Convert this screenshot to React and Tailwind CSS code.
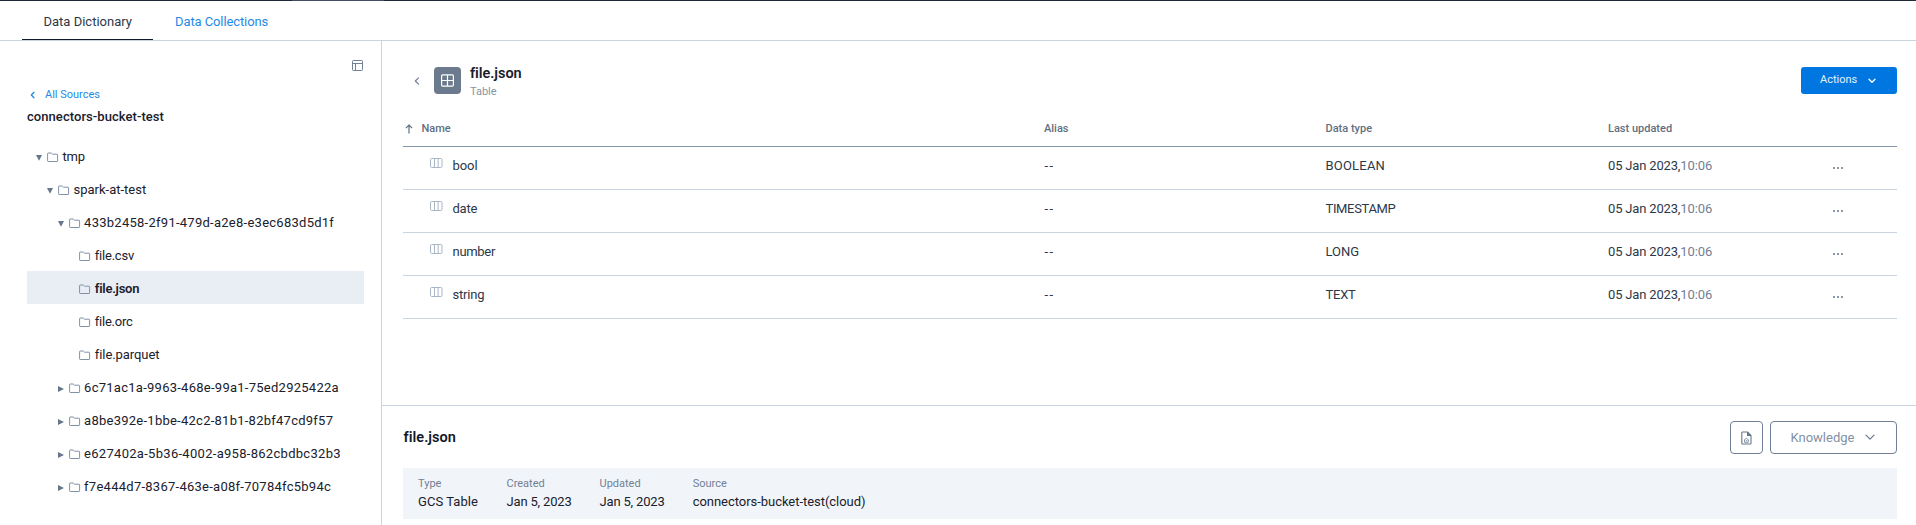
import React from 'react';

const Folder = () => (
  <svg width="12" height="11" viewBox="0 0 12 11" fill="none" stroke="#8091a5" className="shrink-0">
    <path d="M1 1h3.200l1.200 1.200H10a.6.6 0 0 1 .6.6v6.100a.6.6 0 0 1-.6.6H1.200a.6.6 0 0 1-.6-.6V1.500a.5.5 0 0 1 .4-.5z" />
  </svg>
);

const Caret = ({ state }) => (
  <svg width="6" height="6" viewBox="0 0 6 6" fill="#66778b" className="mt-[2px] shrink-0">
    {state === 'open' && <path d="M0 0h6L3 5.700z" />}
    {state === 'closed' && <path d="M0 0v6L6 3z" />}
  </svg>
);

const ColumnIcon = () => (
  <svg width="13" height="11" viewBox="0 0 13 11" fill="none" stroke="#a9b6c5" className="shrink-0">
    <rect x=".5" y=".5" width="11.5" height="9" rx="1.2" />
    <path d="M4.500 .5v9M8.100 .5v9" />
  </svg>
);

const Chevron = ({ d, w, h, color, sw = 1.2 }) => (
  <svg width={w} height={h} viewBox={`0 0 ${w} ${h}`} fill="none" stroke={color} strokeWidth={sw} strokeLinecap="round" strokeLinejoin="round" className="shrink-0">
    <path d={d} />
  </svg>
);

const tree = [
  { name: 'tmp', pad: 'pl-[9px]', state: 'open', tr: 'tracking-[-0.15px]' },
  { name: 'spark-at-test', pad: 'pl-[20px]', state: 'open', tr: 'tracking-[0px]' },
  { name: '433b2458-2f91-479d-a2e8-e3ec683d5d1f', pad: 'pl-[30.6px]', state: 'open', tr: 'tracking-[0.26px]' },
  { name: 'file.csv', pad: 'pl-[41.3px]', tr: 'tracking-[-0.22px]' },
  { name: 'file.json', pad: 'pl-[41.3px]', active: true, tr: 'tracking-[-0.25px]' },
  { name: 'file.orc', pad: 'pl-[41.3px]', tr: 'tracking-[-0.24px]' },
  { name: 'file.parquet', pad: 'pl-[41.3px]', tr: 'tracking-[-0.07px]' },
  { name: '6c71ac1a-9963-468e-99a1-75ed2925422a', pad: 'pl-[30.6px]', state: 'closed', tr: 'tracking-[0.26px]' },
  { name: 'a8be392e-1bbe-42c2-81b1-82bf47cd9f57', pad: 'pl-[30.6px]', state: 'closed', tr: 'tracking-[0.25px]' },
  { name: 'e627402a-5b36-4002-a958-862cbdbc32b3', pad: 'pl-[30.6px]', state: 'closed', tr: 'tracking-[0.29px]' },
  { name: 'f7e444d7-8367-463e-a08f-70784fc5b94c', pad: 'pl-[30.6px]', state: 'closed', tr: 'tracking-[0.26px]' },
];

const columns = [
  { name: 'bool', type: 'BOOLEAN', nameTr: 'tracking-[-0.05px]', typeTr: 'tracking-[0.2px]' },
  { name: 'date', type: 'TIMESTAMP', nameTr: 'tracking-[-0.25px]', typeTr: 'tracking-[-0.34px]' },
  { name: 'number', type: 'LONG', nameTr: 'tracking-[-0.3px]', typeTr: 'tracking-[0px]' },
  { name: 'string', type: 'TEXT', nameTr: 'tracking-[-0.2px]', typeTr: 'tracking-[-0.25px]' },
];

const details = [
  { label: 'Type', value: 'GCS Table', w: 'w-[88.5px]', tr: 'tracking-[0.05px]' },
  { label: 'Created', value: 'Jan 5, 2023', w: 'w-[93px]', tr: 'tracking-[-0.17px]' },
  { label: 'Updated', value: 'Jan 5, 2023', w: 'w-[93.2px]', tr: 'tracking-[-0.17px]' },
  { label: 'Source', value: 'connectors-bucket-test(cloud)', w: 'w-[200px]', tr: 'tracking-[-0.04px]' },
];

const grid = 'grid grid-cols-[641px_281.5px_282.5px_224px_65px]';

function Sidebar() {
  return (
    <aside className="w-[382px] shrink-0 border-r border-[#cbd5e1] pl-[27px] pr-[17px]">
      <div className="flex h-[42px] justify-end pt-[18px]">
        <svg width="13" height="13" viewBox="0 0 13 13" fill="none" stroke="#718096" className="mt-[1px]">
          <rect x="1.5" y=".5" width="10" height="10" rx=".8" />
          <path d="M1.5 3.5h10M4.5 3.5v7" />
        </svg>
      </div>
      <a className="flex h-[22px] items-center pt-[2px] text-[11px] text-[#1f8ae6]">
        <span className="flex w-[18px] pl-[3px]">
          <Chevron w={6} h={8} d="M4 1.3 1.3 4 4 6.7" color="#1f8ae6" sw={1.3} />
        </span>
        All Sources
      </a>
      <h2 className="h-[34px] text-[13px] leading-[24px] font-medium tracking-[0.06px] text-[#1a202c]">connectors-bucket-test</h2>
      <ul>
        {tree.map((n) => (
          <li key={n.name} className={`flex h-[33px] items-center pt-[2px] text-[13px] text-[#1a202c] ${n.pad} ${n.active ? 'bg-[#e9eef5] font-semibold' : ''}`}>
            <Caret state={n.state} />
            <span className="ml-[5px] mr-[3.5px] pt-[2px]"><Folder /></span>
            <span className={`whitespace-nowrap ${n.tr}`}>{n.name}</span>
          </li>
        ))}
      </ul>
    </aside>
  );
}

function TablePanel() {
  return (
    <section className="h-[365px] border-b border-[#cbd5e1] pl-[21px] pr-[19px]">
      <header className="flex h-[53px] pt-[26px]">
        <span className="flex h-[27px] w-[31px] items-center pl-[11px]">
          <Chevron w={7} h={8} d="M4.5 .8 1.3 4l3.2 3.2" color="#718096" />
        </span>
        <span className="flex size-[27px] items-center justify-center rounded-[4px] bg-[#6b7a8d]">
          <svg width="13" height="13" viewBox="0 0 13 13" fill="none" stroke="#fff" strokeWidth="1.2">
            <rect x=".6" y=".9" width="11.8" height="11.2" rx="1" />
            <path d="M6.5 .9v11.2M.6 6.5h11.8" />
          </svg>
        </span>
        <div className="ml-[9px] -mt-[2px] flex-1">
          <div className="text-[14.5px] leading-[18px] font-semibold tracking-[-0.05px] text-[#1a202c]">file.json</div>
          <div className="text-[11px] leading-[17px] text-[#8593a5]">Table</div>
        </div>
        <button className="flex h-[27px] w-[96px] items-center rounded-[3px] bg-[#0077e0] pl-[19px] text-[11px] text-[#e4f1fd]">
          Actions
          <span className="ml-[11px]"><Chevron w={8} h={6} d="M1 1.3 4 4.3l3-3" color="#fff" sw={1.3} /></span>
        </button>
      </header>
      <div className={`${grid} mt-[15px] h-[38px] items-center border-b border-[#8496a9] pt-[3px] text-[11px] font-medium text-[#5f6f82]`}>
        <div className="flex items-center">
          <svg width="8" height="10" viewBox="0 0 8 10" fill="none" stroke="#5f6f82" strokeWidth="1.2" className="ml-[2px] mr-[8.5px] -mt-px">
            <path d="M4 9.5V1M.9 4.2 4 1l3.1 3.2" />
          </svg>
          Name
        </div>
        <div>Alias</div>
        <div>Data type</div>
        <div>Last updated</div>
      </div>
      {columns.map((c) => (
        <div key={c.name} className={`${grid} h-[43px] border-b border-[#cbd5e1] pt-[8px] text-[13px] leading-[21px] text-[#2d3748]`}>
          <div className="flex pl-[27px]">
            <span className="mr-[9.5px] mt-[3px]"><ColumnIcon /></span>
            <span className={c.nameTr}>{c.name}</span>
          </div>
          <div className="pl-[0.5px] tracking-[1.4px]">--</div>
          <div className={c.typeTr}>{c.type}</div>
          <div className="whitespace-nowrap">
            <span className="tracking-[-0.17px]">05 Jan 2023,</span>
            <span className="tracking-[-0.05px] text-[#718096]">10:06</span>
          </div>
          <div className="flex gap-[2px] pt-[12px] pl-[1px]">
            <i className="size-[2px] bg-[#8a98a9]" />
            <i className="size-[2px] bg-[#8a98a9]" />
            <i className="size-[2px] bg-[#8a98a9]" />
          </div>
        </div>
      ))}
    </section>
  );
}

function DetailPanel() {
  return (
    <section className="pl-[21px] pr-[19px]">
      <div className="flex h-[62px] pt-[15px]">
        <h3 className="flex-1 pl-[0.5px] text-[14.5px] leading-[33px] font-semibold tracking-[0.05px] text-[#111827]">file.json</h3>
        <button className="mr-[7px] flex h-[33px] w-[33px] items-center justify-center rounded-[4px] border border-[#718096]">
          <svg width="11" height="14" viewBox="0 0 11 14" fill="none" stroke="#66778b" strokeWidth="1.1">
            <path d="M1.6 1h5L10 4.4v7.8a.8.8 0 0 1-.8.8H1.6a.8.8 0 0 1-.8-.8V1.8A.8.8 0 0 1 1.600 1z" />
            <path d="M6.600 1v3.400H10" fill="#66778b" />
            <path d="M3 9.200 5.400 7.300l2.400 1.900M3.600 9v2.300h3.600V9M5.400 9.200v1" strokeWidth=".8" />
          </svg>
        </button>
        <button className="flex h-[33px] w-[127px] items-center rounded-[4px] border border-[#718096] pl-[19.5px] text-[13px] text-[#8291a4]">
          Knowledge
          <span className="ml-[11px] -mt-px"><Chevron w={10} h={7} d="M1 1.200 5 5.200l4-4" color="#66778b" sw={1.200} /></span>
        </button>
      </div>
      <div className="flex h-[51px] bg-[#f1f5f9] pl-[15px] pt-[7px]">
        {details.map((d) => (
          <div key={d.label} className={d.w}>
            <div className="text-[11px] leading-[17px] text-[#718096]">{d.label}</div>
            <div className={`whitespace-nowrap text-[13px] leading-[20px] text-[#1a202c] ${d.tr}`}>{d.value}</div>
          </div>
        ))}
      </div>
    </section>
  );
}

export default function App() {
  return (
    <div className="flex h-[525px] w-[1916px] flex-col overflow-hidden bg-white font-[Roboto,sans-serif]">
      <div className="flex h-px shrink-0 bg-[#1f2937]">
        <div className="ml-[292px] w-[92px] bg-[#414d60]" />
      </div>
      <nav className="flex h-[40px] shrink-0 border-b border-[#cbd5e1] pl-[22px] text-[13px] leading-[41px]">
        <div className="h-[39px] w-[131px] border-b border-[#0f1a2a] pl-[21.5px] text-[#2d3748]">Data Dictionary</div>
        <div className="pl-[22px] tracking-[-0.1px] text-[#1f8ae6]">Data Collections</div>
      </nav>
      <div className="flex flex-1">
        <Sidebar />
        <main className="min-w-0 flex-1">
          <TablePanel />
          <DetailPanel />
        </main>
      </div>
    </div>
  );
}
